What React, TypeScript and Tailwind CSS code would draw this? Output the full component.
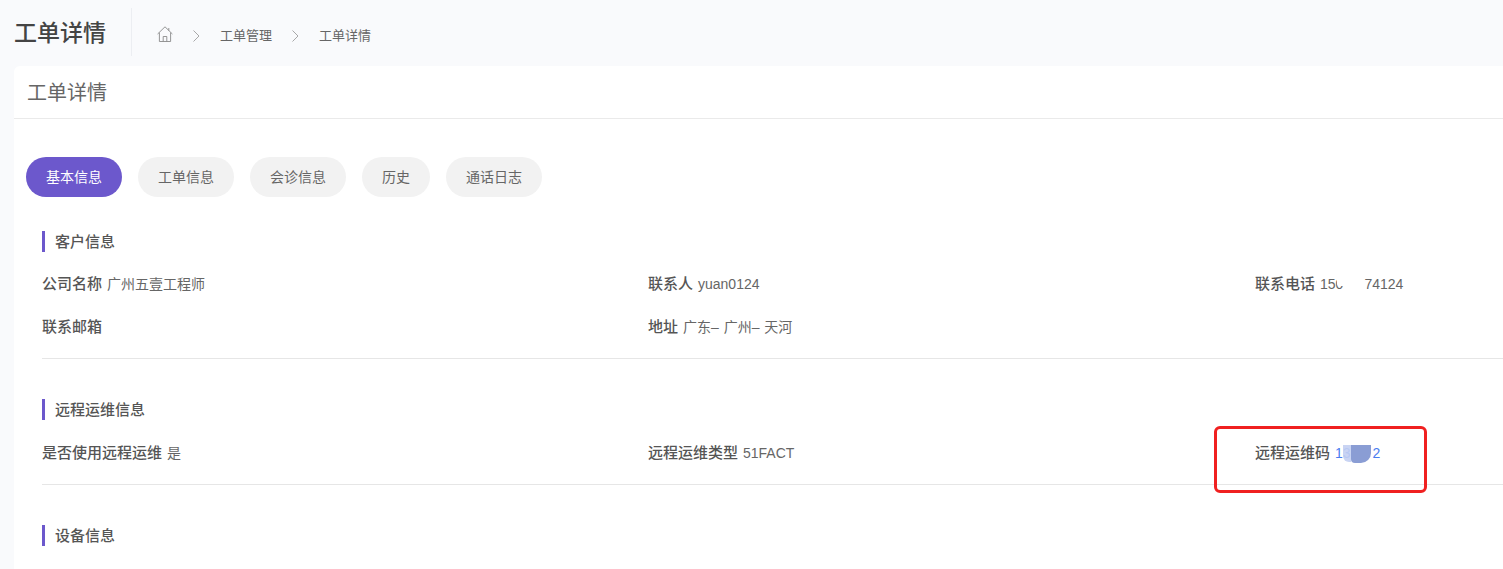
const font = "font-['Liberation_Sans','Noto_Sans_CJK_SC',sans-serif]";

const tabs = [
  { label: "基本信息", width: "w-[96px]", active: true },
  { label: "工单信息", width: "w-[96px]" },
  { label: "会诊信息", width: "w-[96px]" },
  { label: "历史", width: "w-[68px]" },
  { label: "通话日志", width: "w-[96px]" },
];

function SectionTitle({ children }: { children: string }) {
  return (
    <div className="flex h-[21px] items-center border-l-[3px] border-[#6c58cc] pt-[2px] pl-[10px] text-[15px] font-medium text-[#555]">
      {children}
    </div>
  );
}

function Field({ label, children }: { label: string; children?: React.ReactNode }) {
  return (
    <div className="flex h-[21px] items-center gap-[5px] text-[15px] leading-[21px]">
      <span className="font-medium text-[#555]">{label}</span>
      <span className="pt-[2px] text-[14px] text-[#666]">{children}</span>
    </div>
  );
}

export default function App() {
  return (
    <div className={`relative h-[569px] w-[1503px] overflow-hidden bg-[#f9fafc] ${font}`}>
      {/* Page header */}
      <header className="flex h-[66px] items-start pl-[14px]">
        <h1 className="mt-[18px] text-[23px] leading-[30px] font-medium text-[#444]">工单详情</h1>
        <div className="mt-[8px] ml-[25px] h-[48px] w-px bg-[#eceef2]" />
        <nav className="mt-[25px] ml-[25px] flex h-[20px] items-center text-[13px] leading-[20px] text-[#666]">
          <svg className="-mt-[2px] h-[16px] w-[16px]" viewBox="0 0 16 16" fill="none" stroke="#8a8a8a" strokeWidth="0.9">
            <path d="M.6 8 8 .8 15.4 8" />
            <path d="M2.4 6.6v8.9h11.2V6.6" />
            <path d="M6.2 15.5v-5h3.6v5" />
            <path d="M11.8 2v2.8" />
          </svg>
          <svg className="mt-[2px] ml-[20px] h-[12px] w-[7px]" viewBox="0 0 7 12" fill="none" stroke="#a8a8a8">
            <path d="m.5.5 5.5 5.5-5.5 5.5" />
          </svg>
          <span className="ml-[20px] pt-[2px]">工单管理</span>
          <svg className="mt-[2px] ml-[20px] h-[12px] w-[7px]" viewBox="0 0 7 12" fill="none" stroke="#a8a8a8">
            <path d="m.5.5 5.5 5.5-5.5 5.5" />
          </svg>
          <span className="ml-[20px] pt-[2px]">工单详情</span>
        </nav>
      </header>

      {/* Card */}
      <main className="ml-[14px] h-[503px] rounded-tl-[6px] bg-white">
        <div className="flex h-[53px] items-center border-b border-[#eaeaea] pt-[2px] pl-[13px] text-[20px] text-[#666]">
          工单详情
        </div>

        <div className="mt-[38px] flex gap-[16px] pl-[12px]">
          {tabs.map((tab) => (
            <div
              key={tab.label}
              className={`flex h-[40px] items-center justify-center rounded-[20px] text-[14px] ${tab.width} ${
                tab.active ? "bg-[#6c58cc] text-white" : "bg-[#f2f2f2] text-[#666]"
              }`}
            >
              {tab.label}
            </div>
          ))}
        </div>

        <div className="mt-[34px] ml-[28px]">
          <SectionTitle>客户信息</SectionTitle>
          <div className="mt-[21px] grid grid-cols-[606px_607px_1fr] gap-y-[22px] border-b border-[#e6e6e6] pb-[21px]">
            <Field label="公司名称">广州五壹工程师</Field>
            <Field label="联系人">yuan0124</Field>
            <Field label="联系电话">
              150<span className="ml-[21px]">74124</span>
            </Field>
            <Field label="联系邮箱" />
            <Field label="地址">
              <span className="[word-spacing:1px]">广东– 广州– 天河</span>
            </Field>
          </div>

          <div className="mt-[40px]">
            <SectionTitle>远程运维信息</SectionTitle>
          </div>
          <div className="mt-[22px] grid grid-cols-[606px_607px_1fr] border-b border-[#e6e6e6] pb-[21px]">
            <Field label="是否使用远程运维">是</Field>
            <Field label="远程运维类型">51FACT</Field>
            <Field label="远程运维码">
              <span className="text-[#4a7cf0]">
                13<span className="ml-[22px]">2</span>
              </span>
            </Field>
          </div>

          <div className="mt-[40px]">
            <SectionTitle>设备信息</SectionTitle>
          </div>
        </div>
      </main>

      {/* Redaction patches */}
      <div className="absolute top-[273px] left-[1337px] h-[13px] w-[16px] rounded-[2px] bg-white" />
      <div className="absolute top-[445px] left-[1343px] h-[17px] w-[8px] rounded-bl-[6px] bg-[#c3cff2]/90" />
      <div className="absolute top-[445px] left-[1351px] h-[18px] w-[20px] rounded-br-[10px] rounded-bl-[4px] bg-[#8a9dd4]" />

      {/* Red annotation */}
      <div className="absolute top-[426px] left-[1214px] h-[67px] w-[213px] rounded-[6px] border-[3px] border-[#f02020]" />
    </div>
  );
}
